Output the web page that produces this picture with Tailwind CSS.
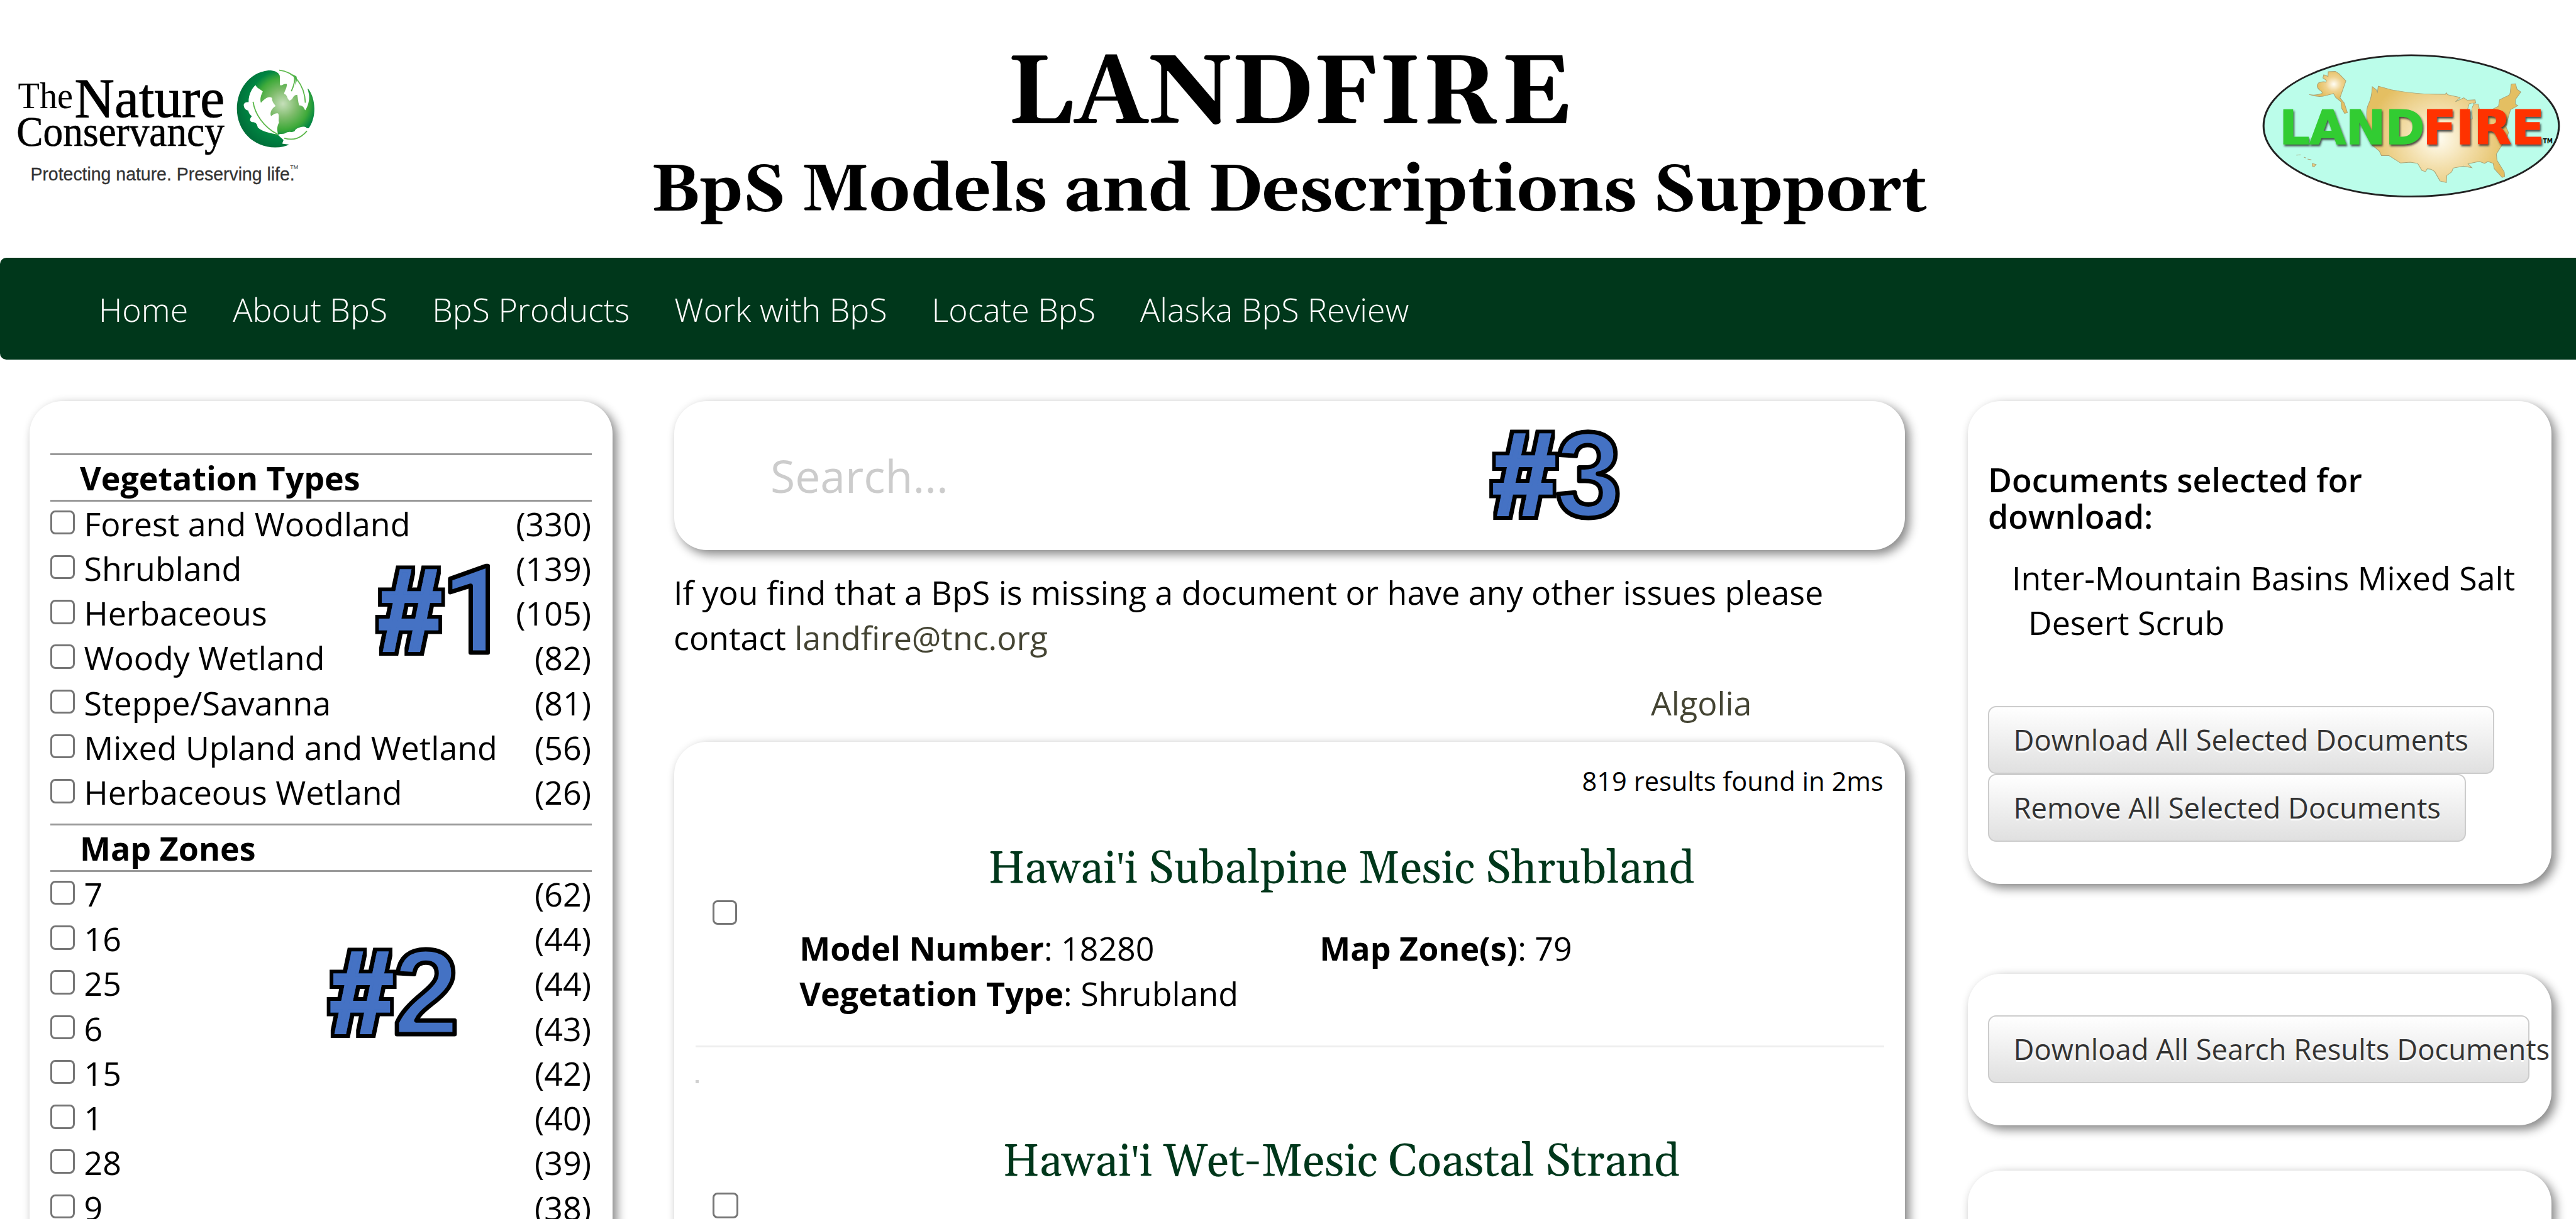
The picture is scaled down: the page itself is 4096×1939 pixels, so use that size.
<!DOCTYPE html>
<html lang="en">
<head>
<meta charset="utf-8">
<title>LANDFIRE BpS Models and Descriptions Support</title>
<script src="https://cdn.jsdelivr.net/npm/@tailwindcss/browser@4"></script>
</head>
<body class="relative h-screen w-screen overflow-hidden bg-white font-['Open_Sans',sans-serif] text-[51.95px] leading-[71.25px] text-black">

<header class="flex h-[410px] items-start justify-between">
  <svg class="mt-[74.5px] h-[242px] w-[558.5px] shrink-0" viewBox="0 0 1568 780" preserveAspectRatio="none">
    <defs>
      <radialGradient id="globe" gradientUnits="userSpaceOnUse" cx="265" cy="200" r="235">
        <stop offset="0" stop-color="#c6dfba"/><stop offset=".3" stop-color="#7fbc6c"/><stop offset=".56" stop-color="#3faa3a"/><stop offset=".74" stop-color="#008542"/><stop offset="1" stop-color="#00703a"/>
      </radialGradient>
    </defs>
    <g font-family="'Liberation Serif',serif" fill="#000">
      <text x="80" y="314" font-size="190" textLength="246" lengthAdjust="spacingAndGlyphs">The</text>
      <text x="333" y="357" font-size="285" textLength="670" lengthAdjust="spacingAndGlyphs" stroke="#000" stroke-width="3">Nature</text>
      <text x="74" y="505" font-size="218" textLength="928" lengthAdjust="spacingAndGlyphs" stroke="#000" stroke-width="2">Conservancy</text>
    </g>
    <g font-family="'Liberation Sans Narrow','Liberation Sans',sans-serif" fill="#333">
      <text x="136" y="684" font-size="98" textLength="1180" lengthAdjust="spacingAndGlyphs" stroke="#333" stroke-width="1">Protecting nature. Preserving life.</text>
      <text x="1295" y="624" font-size="30" textLength="36" lengthAdjust="spacingAndGlyphs">TM</text>
    </g>
    <g transform="translate(1032.3 90) scale(.8711 1)">
      <path fill="url(#globe)" d="M248 55C240 35 215 28 190 29C90 40 29 130 29 225C29 340 115 424 225 424C255 424 280 418 302 408L262 403L268 386L240 360L250 355C300 355 370 322 397 326C418 295 426 262 426 225C425 185 415 150 394 123C387 125 389 135 391 150L380 140L300 60L262 40Z"/>
      <path fill="#fff" d="M125 105C110 116 88 150 89 192C72 190 64 198 64 208C66 225 75 232 87 235C90 250 96 258 106 264C92 278 94 292 108 294C124 294 132 300 136 322C160 345 205 352 240 358C235 335 233 318 245 296C240 285 248 262 240 250C225 246 215 256 204 264C196 245 208 222 228 212C220 200 208 190 209 170C190 158 172 175 152 195C145 175 155 150 162 138C150 125 132 122 125 105Z"/>
      <path fill="none" stroke="#5db84c" stroke-width="6" d="M112 190C120 250 165 320 238 357"/>
      <path fill="#fff" d="M244 28C252 60 248 80 250 105C262 108 270 95 285 99C286 120 272 135 271 150C288 152 284 172 298 184C320 180 312 155 338 154C342 170 342 190 348 208C368 208 372 220 379 234C390 220 403 185 398 152C390 90 340 30 244 26Z"/>
      <path fill="none" stroke="#5db84c" stroke-width="6" d="M246 28C320 35 375 100 380 195M322 58C330 80 320 110 308 136"/>
      <path fill="#4cb04a" d="M312 48C326 62 332 80 327 104C338 86 338 72 334 60Z"/>
      <path fill="#fff" d="M240 360C258 362 270 358 285 347C302 340 316 348 326 348C320 332 345 320 372 318C388 318 384 330 396 328C380 370 335 402 302 410L262 405L270 386Z"/>
      <path fill="none" stroke="#5db84c" stroke-width="6" d="M272 377C320 390 355 378 388 340"/>
    </g>
  </svg>

  <div class="flex flex-1 flex-col items-center pt-[72px] pr-[25px] font-['Gelasio',Georgia,serif] font-bold">
    <h1 class="text-[156px] leading-[156px]">LANDFIRE</h1>
    <h2 class="mt-[25px] text-[103.9px] leading-[104px] whitespace-nowrap">BpS Models and Descriptions Support</h2>
  </div>

  <svg class="mt-[65.2px] h-[270px] w-[530.6px] shrink-0" viewBox="0 0 1568 870" preserveAspectRatio="none">
    <defs>
      <radialGradient id="usa" gradientUnits="userSpaceOnUse" cx="920" cy="500" r="330">
        <stop offset="0" stop-color="#fffdf2"/><stop offset=".45" stop-color="#f3dfac"/><stop offset="1" stop-color="#e4bf62"/>
      </radialGradient>
      <radialGradient id="ak" gradientUnits="userSpaceOnUse" cx="431" cy="222" r="75">
        <stop offset="0" stop-color="#fffdf5"/><stop offset=".5" stop-color="#efd28e"/><stop offset="1" stop-color="#e4bf62"/>
      </radialGradient>
      <filter id="sh" x="-5%" y="-10%" width="115%" height="130%"><feDropShadow dx="5" dy="9" stdDeviation="5" flood-color="#222" flood-opacity=".8"/></filter>
    </defs>
    <ellipse cx="795" cy="436" rx="694" ry="362" fill="#bbfdea" stroke="#222" stroke-width="9"/>
    <g stroke="#a9a275" stroke-width="3">
      <path fill="url(#usa)" d="M612 235L630 250L636 264L640 232L700 250Q800 272 900 273L955 274L960 266L966 276L1025 290L1003 312L1042 292L1058 304L1095 302L1098 318L1068 322L1060 350L1066 400L1082 400L1078 350L1090 322L1110 325L1115 350L1140 372L1178 350L1205 335L1210 302L1235 288Q1262 280 1260 262L1265 222L1285 220L1292 248L1310 262L1285 300L1284 324L1296 332L1262 352L1250 395L1240 440L1252 470L1244 500L1215 545L1195 580L1198 612L1232 672L1234 696L1222 700L1185 655L1180 628L1155 618L1140 628L1115 618L1062 630L1080 650L1040 642L992 652L985 672L962 690L960 726L930 718L905 670L888 658L870 656L862 670L845 664L825 628L790 622L745 626L690 588L655 588L645 565L612 535Q585 480 590 430Q580 360 592 330Q610 290 612 235Z"/>
      <path fill="url(#ak)" d="M405 158L438 156L455 168L488 205L460 292L480 318L495 368L482 372L468 345L465 312L440 290L430 270L395 280Q360 292 316 275Q345 282 375 270Q382 262 362 250Q345 230 360 215Q380 206 394 212L396 202L380 190L384 174L404 182Z"/>
      <path fill="#e9cb80" d="M255 586L275 584M291 596L300 600M308 606L326 610M330 628L348 634L338 646L330 642Z"/>
    </g>
    <path fill="#bbfdea" d="M1068 325L1084 318L1078 355L1080 398L1068 398L1062 355Z"/>
    <g font-family="'DejaVu Sans',sans-serif" font-weight="bold" font-size="240" filter="url(#sh)">
      <text x="176" y="527" fill="#33cc33" stroke="#33cc33" stroke-width="5" textLength="682" lengthAdjust="spacingAndGlyphs">LAND</text>
      <text x="850" y="527" fill="#ff3300" stroke="#ff3300" stroke-width="5" textLength="570" lengthAdjust="spacingAndGlyphs">FIRE</text>
    </g>
    <text x="1414" y="524" font-family="'DejaVu Sans',sans-serif" font-weight="bold" font-size="36" textLength="46" lengthAdjust="spacingAndGlyphs">TM</text>
  </svg>
</header>

<nav class="flex h-[162px] items-center gap-[71px] rounded-l-[10px] bg-[#00371b] pt-[2px] pl-[157px] font-light text-white">
  <a>Home</a><a>About BpS</a><a>BpS Products</a><a>Work with BpS</a><a>Locate BpS</a><a>Alaska BpS Review</a>
</nav>

<main class="flex items-start pt-[66px] pl-[47px]">
  <aside class="h-[1500px] w-[927px] shrink-0 rounded-[52px] bg-white px-[33px] pt-[82.5px] shadow-[6.5px_6.5px_16.25px_#888]">
    <div class="h-[77px] border-y-[3px] border-[#9a9a9a] pl-[47px] font-bold">Vegetation Types</div>
    <ul id="veg" class="-mt-[1px] mb-[14.5px]"></ul>
    <div class="h-[77px] border-y-[3px] border-[#9a9a9a] pl-[47px] font-bold">Map Zones</div>
    <ul id="zones" class="-mt-[1px]"></ul>
  </aside>

  <section class="ml-[98px] w-[1957px] shrink-0">
    <div class="flex h-[237px] items-center rounded-[52px] bg-white pl-[153px] text-[71.5px] text-[#ccc] shadow-[6.5px_6.5px_16.25px_#888]">Search...</div>
    <p class="mt-[31.4px] -ml-[1px] whitespace-nowrap">If you find that a BpS is missing a document or have any other issues please<br>contact <a class="text-[#443]">landfire@tnc.org</a></p>
    <p class="mt-[33.3px] pl-[1553px] text-[#443]">Algolia</p>
    <div class="mt-[27px] h-[1000px] rounded-[52px] bg-white px-[33.5px] pt-[34px] shadow-[6.5px_6.5px_16.25px_#888]">
      <p class="mb-[71px] pr-[1px] text-right text-[41.6px] leading-[57px]">819 results found in 2ms</p>
      <article class="flex h-[324px] items-start border-b-[3px] border-[#eee]">
        <span class="mt-[89.3px] ml-[27.4px] size-[39px] rounded-[8px] border-[3.25px] border-[#767676]"></span>
        <div class="ml-[98px] w-[1727px]">
          <h3 class="h-[77px] pt-[5px] text-center font-['Gelasio',Georgia,serif] text-[71.5px] leading-[72px] text-[#00371b]">Hawai<span class="font-['Liberation_Serif',serif] leading-[0]">'</span>i Subalpine Mesic Shrubland</h3>
          <div class="mt-[53px] grid grid-cols-[827px_1fr] pl-[1.5px]">
            <p><b>Model Number</b>: 18280</p>
            <p><b>Map Zone(s)</b>: 79</p>
            <p><b>Vegetation Type</b>: Shrubland</p>
          </div>
        </div>
      </article>
      <div class="mt-[51.6px] mb-[85px] size-[5px] bg-[#d0d0d0]"></div>
      <article class="flex items-start">
        <span class="mt-[89.3px] ml-[27.4px] size-[41px] rounded-[8px] border-[3.25px] border-[#767676]"></span>
        <div class="ml-[96px] w-[1727px]">
          <h3 class="h-[77px] pt-[5px] text-center font-['Gelasio',Georgia,serif] text-[71.5px] leading-[72px] text-[#00371b]">Hawai<span class="font-['Liberation_Serif',serif] leading-[0]">'</span>i Wet-Mesic Coastal Strand</h3>
        </div>
      </article>
    </div>
  </section>

  <aside class="ml-[100px] w-[928px] shrink-0">
    <div class="h-[768px] rounded-[52px] bg-white pt-[96px] pl-[32px] shadow-[6.5px_6.5px_16.25px_#888]">
      <h4 class="leading-[58.2px] font-semibold">Documents selected for<br>download:</h4>
      <p class="mt-[32.3px] pl-[64px] -indent-[26px]">Inter-Mountain Basins Mixed Salt<br>Desert Scrub</p>
      <div class="mt-[97.6px] flex h-[107.8px] w-[805px] items-center rounded-[13px] border-[2.5px] border-[#ccc] bg-linear-to-b from-white to-[#e0e0e0] pl-[38.5px] text-[45.4px] whitespace-nowrap text-[#333] [text-shadow:0_3px_0_#fff]">Download All Selected Documents</div>
      <div class="mt-[.5px] flex h-[107.8px] w-[760px] items-center rounded-[13px] border-[2.5px] border-[#ccc] bg-linear-to-b from-white to-[#e0e0e0] pl-[38.5px] text-[45.4px] whitespace-nowrap text-[#333] [text-shadow:0_3px_0_#fff]">Remove All Selected Documents</div>
    </div>
    <div class="mt-[143.4px] h-[240.5px] rounded-[52px] bg-white pt-[65.8px] pl-[32px] shadow-[6.5px_6.5px_16.25px_#888]">
      <div class="flex h-[107.8px] w-[861px] items-center rounded-[13px] border-[2.5px] border-[#ccc] bg-linear-to-b from-white to-[#e0e0e0] pl-[38.5px] text-[45.4px] whitespace-nowrap text-[#333] [text-shadow:0_3px_0_#fff]">Download All Search Results Documents</div>
    </div>
    <div class="mt-[72px] h-[400px] rounded-[52px] bg-white shadow-[6.5px_6.5px_16.25px_#888]"></div>
  </aside>
</main>

<!-- Numbered callouts lying over the page -->
<svg class="absolute top-0 left-0 h-[1939px] w-[4096px]" viewBox="0 0 4096 1939">
  <defs>
    <filter id="outline" x="-20%" y="-20%" width="140%" height="140%">
      <feMorphology in="SourceAlpha" operator="dilate" radius="6"/>
      <feMerge><feMergeNode/><feMergeNode in="SourceGraphic"/></feMerge>
    </filter>
  </defs>
  <g font-family="'Liberation Sans',Arial,sans-serif" font-weight="bold" fill="#4472c4">
    <g font-size="186" stroke="#4472c4" stroke-width="5" filter="url(#outline)">
      <text x="602" y="1035" textLength="100" lengthAdjust="spacingAndGlyphs">#</text>
      <text x="525" y="1642.5" textLength="100" lengthAdjust="spacingAndGlyphs">#</text>
      <text x="2373.5" y="819" textLength="100" lengthAdjust="spacingAndGlyphs">#</text>
    </g>
    <g font-size="193" stroke="#000" stroke-width="7" stroke-linejoin="round">
      <text x="700" y="1037.6" font-family="Roboto,sans-serif">1</text>
      <text x="624.5" y="1645" textLength="106" lengthAdjust="spacingAndGlyphs">2</text>
      <text x="2473" y="821.5" textLength="106" lengthAdjust="spacingAndGlyphs">3</text>
    </g>
  </g>
</svg>

<script>
  const row = ([label, count]) => `<li class="flex items-start pr-[1px]"><span class="mt-[15.2px] mr-[15px] size-[38.5px] rounded-[8px] border-[3.25px] border-[#767676]"></span><span>${label}</span><span class="ml-auto">(${count})</span></li>`;
  document.getElementById('veg').innerHTML = [['Forest and Woodland',330],['Shrubland',139],['Herbaceous',105],['Woody Wetland',82],['Steppe/Savanna',81],['Mixed Upland and Wetland',56],['Herbaceous Wetland',26]].map(row).join('');
  document.getElementById('zones').innerHTML = [[7,62],[16,44],[25,44],[6,43],[15,42],[1,40],[28,39],[9,38]].map(row).join('');
</script>
</body>
</html>
